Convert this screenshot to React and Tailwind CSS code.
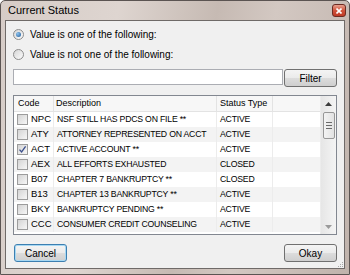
import React from 'react';

const rows = [
  { code: 'NPC', desc: 'NSF STILL HAS PDCS ON FILE **', type: 'ACTIVE' },
  { code: 'ATY', desc: 'ATTORNEY REPRESENTED ON ACCT', type: 'ACTIVE' },
  { code: 'ACT', desc: 'ACTIVE ACCOUNT **', type: 'ACTIVE', checked: true },
  { code: 'AEX', desc: 'ALL EFFORTS EXHAUSTED', type: 'CLOSED' },
  { code: 'B07', desc: 'CHAPTER 7 BANKRUPTCY **', type: 'CLOSED' },
  { code: 'B13', desc: 'CHAPTER 13 BANKRUPTCY **', type: 'ACTIVE' },
  { code: 'BKY', desc: 'BANKRUPTCY PENDING **', type: 'ACTIVE' },
  { code: 'CCC', desc: 'CONSUMER CREDIT COUNSELING', type: 'ACTIVE' },
];

const Radio = ({ selected }) => (
  <span className="w-[11px] h-[11px] rounded-full border border-[#8c8c8c] bg-[linear-gradient(135deg,#d6d6d6,#fbfbfb)] flex items-center justify-center shrink-0">
    {selected && (
      <span className="w-[5px] h-[5px] rounded-full bg-[radial-gradient(circle_at_35%_35%,#8ec3ef,#1d5a98)]" />
    )}
  </span>
);

const Check = ({ checked }) => (
  <span className="w-[11px] h-[11px] border border-[#9c9c9c] bg-[linear-gradient(135deg,#d4d4d4,#f7f7f7)] flex items-center justify-center shrink-0">
    {checked && (
      <svg width="9" height="9" viewBox="0 0 9 9">
        <path d="M1.5 4.6 L3.6 7 L7.6 1.4" fill="none" stroke="#3b4f8c" strokeWidth="1.3" />
      </svg>
    )}
  </span>
);

const WinButton = ({ label, focused }) => (
  <button
    className={`w-[53px] h-[18px] rounded-[3px] border text-[10px] text-black bg-[linear-gradient(#f4f4f4_0%,#ebebeb_48%,#dcdcdc_52%,#cfcfcf_100%)] ${
      focused ? 'border-[#3c7fb1] shadow-[inset_0_0_0_1px_#a7d8f3]' : 'border-[#707070]'
    }`}
  >
    {label}
  </button>
);

export default function App() {
  return (
    <div
      className="w-[350px] h-[275px] flex flex-col border border-[#5b5452] rounded-t-[5px] bg-[linear-gradient(100deg,#d6ccc7_0%,#ded5d0_30%,#c6bab3_55%,#d3c8c2_70%,#c0b3ac_100%)]"
      style={{ fontFamily: '"Liberation Sans", Arial, sans-serif' }}
    >
      {/* title bar */}
      <div className="h-[19px] flex items-start justify-between pl-[7px] pr-[3px]">
        <span className="text-[11px] leading-[19px] text-black">Current Status</span>
        <span className="mt-[3px] w-[14px] h-[13px] rounded-[3px] border border-[#6d2b22] bg-[linear-gradient(#e8a08e,#d0533c_50%,#bf3a25)] flex items-center justify-center">
          <svg width="6" height="6" viewBox="0 0 6 6">
            <path d="M0.5 0.5 L5.5 5.5 M5.5 0.5 L0.5 5.5" stroke="#fff" strokeWidth="1.6" />
          </svg>
        </span>
      </div>

      {/* client area */}
      <div className="relative flex-1 mx-[4px] mb-[5px] border border-[#6f6a68] bg-[#f0f0f0] flex flex-col px-[7px] pt-[6px] text-black">
        <div className="h-[14px] flex items-center gap-[6px] text-[10px]">
          <Radio selected />
          <span>Value is one of the following:</span>
        </div>
        <div className="h-[14px] mt-[6px] flex items-center gap-[6px] text-[10px]">
          <Radio />
          <span>Value is not one of the following:</span>
        </div>

        <div className="mt-[8px] flex items-start gap-[1px]">
          <div className="w-[271px] h-[16px] border border-[#abadb3] bg-white" />
          <WinButton label="Filter" />
        </div>

        {/* list */}
        <div className="mt-[8px] h-[140px] border border-[#828790] bg-white flex">
          <div className="w-[306px] flex flex-col text-[9px]">
            <div className="h-[16px] flex bg-[#f7f7f7] border-b border-[#e3e3e3]">
              <div className="w-[40px] pl-[4px] border-r border-[#e3e3e3] flex items-center">Code</div>
              <div className="w-[163px] pl-[2px] border-r border-[#e3e3e3] flex items-center">Description</div>
              <div className="w-[56px] pl-[3px] border-r border-[#e3e3e3] flex items-center">Status Type</div>
              <div className="flex-1" />
            </div>
            {rows.map((r, i) => (
              <div key={r.code} className={`h-[15px] flex text-[8.7px] tracking-[-0.2px] ${i % 2 ? 'bg-[#f3f3f3]' : 'bg-white'}`}>
                <div className="w-[40px] pl-[3px] border-r border-[#ececec] flex items-center gap-[3px]">
                  <Check checked={r.checked} />
                  <span className="text-[9.5px] tracking-normal">{r.code}</span>
                </div>
                <div className="w-[163px] pl-[3px] border-r border-[#ececec] flex items-center whitespace-nowrap overflow-hidden">
                  {r.desc}
                </div>
                <div className="w-[56px] pl-[3px] border-r border-[#ececec] flex items-center">{r.type}</div>
                <div className="flex-1" />
              </div>
            ))}
          </div>

          {/* scrollbar */}
          <div className="flex-1 flex flex-col items-center bg-[linear-gradient(90deg,#e6e6e6,#f4f4f4)] border-l border-[#ececec]">
            <div className="h-[15px] w-full flex items-center justify-center">
              <svg width="7" height="4" viewBox="0 0 7 4">
                <path d="M0 4 L3.5 0 L7 4 Z" fill="#3c3c3c" />
              </svg>
            </div>
            <div className="mt-[1px] w-[12px] h-[27px] rounded-[2px] border border-[#979797] bg-[linear-gradient(90deg,#f3f3f3,#e2e2e2)] flex flex-col items-center justify-center gap-[2px]">
              <span className="w-[6px] h-[1px] bg-[#6a6a6a]" />
              <span className="w-[6px] h-[1px] bg-[#6a6a6a]" />
              <span className="w-[6px] h-[1px] bg-[#6a6a6a]" />
            </div>
            <div className="flex-1" />
            <div className="h-[15px] w-full flex items-center justify-center">
              <svg width="7" height="4" viewBox="0 0 7 4">
                <path d="M0 0 L3.5 4 L7 0 Z" fill="#9a9a9a" />
              </svg>
            </div>
          </div>
        </div>

        <div className="mt-[9px] flex justify-between pl-[1px]">
          <WinButton label="Cancel" focused />
          <WinButton label="Okay" />
        </div>

        {/* size grip */}
        <div className="absolute right-[1px] bottom-[1px] grid grid-cols-3 gap-[1px]">
          <span />
          <span />
          <span className="w-[1px] h-[1px] bg-[#a8a8a8]" />
          <span />
          <span className="w-[1px] h-[1px] bg-[#a8a8a8]" />
          <span className="w-[1px] h-[1px] bg-[#a8a8a8]" />
          <span className="w-[1px] h-[1px] bg-[#a8a8a8]" />
          <span className="w-[1px] h-[1px] bg-[#a8a8a8]" />
          <span className="w-[1px] h-[1px] bg-[#a8a8a8]" />
        </div>
      </div>
    </div>
  );
}
